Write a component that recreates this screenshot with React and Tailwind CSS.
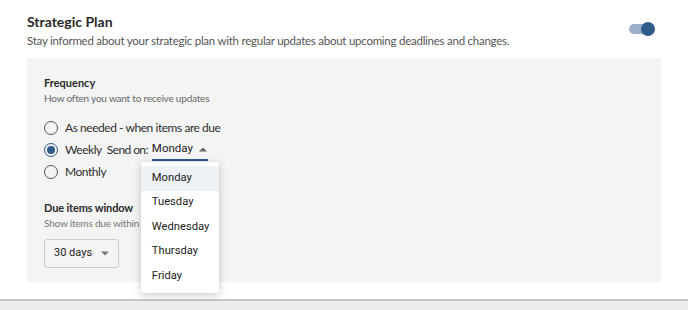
import React, { useState } from 'react';

const days = ['Monday', 'Tuesday', 'Wednesday', 'Thursday', 'Friday'];

const Radio = ({ checked, label, children }) => (
  <div className="flex items-center h-[22px]">
    <span
      className={`w-[14px] h-[14px] rounded-full border-[1.5px] flex items-center justify-center shrink-0 ${
        checked ? 'border-[#2d5b8a]' : 'border-[#555]'
      }`}
    >
      {checked && <span className="w-[8px] h-[8px] rounded-full bg-[#2d5b8a]" />}
    </span>
    <span className="ml-[7px] text-[12px] tracking-[-0.45px] text-[#2e2e2e]">{label}</span>
    {children}
  </div>
);

const App = () => {
  const [frequency] = useState('weekly');
  const [day] = useState('Monday');

  return (
    <div className="w-[688px] h-[310px] bg-white overflow-hidden font-['Lato','Liberation_Sans',sans-serif] flex flex-col">
      <div className="px-[27px] pt-[12px]">
        <div className="flex justify-between items-start">
          <div>
            <h2 className="text-[14px] font-bold text-[#2a2a2a] leading-[18px] mt-[1px]">Strategic Plan</h2>
            <p className="text-[11.5px] tracking-[-0.25px] text-[#555] leading-[16px] mt-[2px]">
              Stay informed about your strategic plan with regular updates about upcoming deadlines and changes.
            </p>
          </div>
          <div className="relative w-[26px] h-[14px] mt-[10px] mr-[6px]">
            <div className="absolute left-0 top-[2px] w-[22px] h-[10px] rounded-full bg-[#9bb0c8]" />
            <div className="absolute right-0 top-0 w-[14px] h-[14px] rounded-full bg-[#2d5b8a]" />
          </div>
        </div>

        <div className="mt-[9px] bg-[#f4f4f4] rounded-[3px] h-[224px] pl-[17px] pt-[18px]">
          <h3 className="text-[11px] font-bold text-[#2a2a2a] leading-[14px]">Frequency</h3>
          <p className="text-[10px] tracking-[-0.2px] text-[#666] leading-[13px] mt-[2px]">How often you want to receive updates</p>

          <div className="mt-[12px] flex flex-col">
            <Radio checked={frequency === 'asNeeded'} label="As needed - when items are due" />
            <Radio checked={frequency === 'weekly'} label="Weekly">
              <span className="ml-[5px] text-[12px] tracking-[-0.6px] text-[#2e2e2e]">Send on:</span>
              <div className="relative ml-[4px]">
                <div className="flex items-center w-[56px] h-[22px] border-b-2 border-[#2d5b8a] font-['Roboto',sans-serif] text-[11.5px] text-[#222]">
                  {day}
                  <svg width="8" height="5" viewBox="0 0 8 5" className="ml-[6px]">
                    <path d="M0 4.5 L4 0.5 L8 4.5 Z" fill="#666" />
                  </svg>
                </div>
                <div className="absolute left-[-11px] top-[23px] w-[78px] bg-white rounded-[3px] shadow-[0_2px_8px_rgba(0,0,0,0.22)] py-[4px] z-10 font-['Roboto',sans-serif]">
                  {days.map((d) => (
                    <div
                      key={d}
                      className={`h-[24.5px] flex items-center pl-[11px] text-[11.2px] text-[#222] ${
                        d === day ? 'bg-[#eef1f5]' : ''
                      }`}
                    >
                      {d}
                    </div>
                  ))}
                </div>
              </div>
            </Radio>
            <Radio checked={frequency === 'monthly'} label="Monthly" />
          </div>

          <h3 className="mt-[18px] text-[11px] tracking-[-0.15px] font-bold text-[#2a2a2a] leading-[14px]">Due items window</h3>
          <p className="text-[10px] tracking-[-0.2px] text-[#777] leading-[13px] mt-[2px]">Show items due within the next</p>

          <div className="mt-[9px] w-[75px] h-[29px] border border-[#ccc] rounded-[3px] flex items-center justify-between pl-[9px] pr-[9px] font-['Roboto',sans-serif] text-[11px] text-[#222]">
            30 days
            <svg width="8" height="5" viewBox="0 0 8 5">
              <path d="M0 0.5 L4 4.5 L8 0.5 Z" fill="#777" />
            </svg>
          </div>
        </div>
      </div>

      <div className="mt-auto h-[2px] bg-[#c6c6c6]" />
      <div className="h-[9px] bg-[#ececec]" />
    </div>
  );
};

export default App;
